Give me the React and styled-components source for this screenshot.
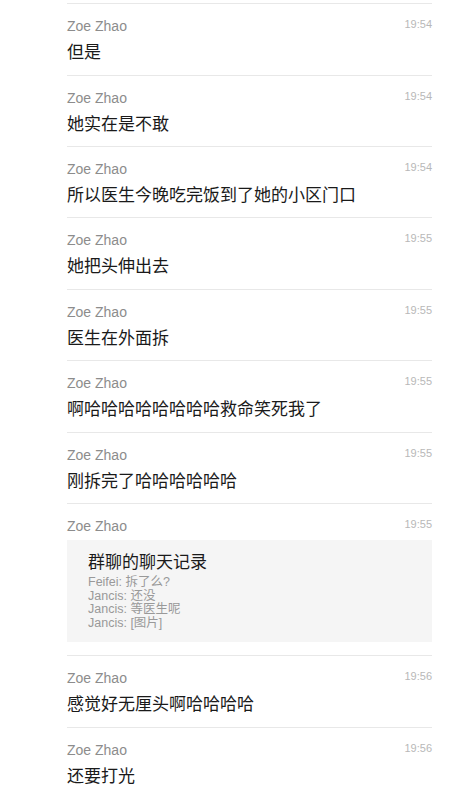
import styled, { createGlobalStyle } from "styled-components";

const GlobalStyle = createGlobalStyle`
  html, body {
    margin: 0;
    padding: 0;
    background: #ffffff;
  }
  body {
    font-family: "Liberation Sans", "Noto Sans CJK SC", sans-serif;
  }
`;

const ChatList = styled.div`
  display: flex;
  flex-direction: column;
  padding: 3.3px 17px 0 67px;
`;

const MessageItem = styled.div`
  display: flex;
  flex-direction: column;
  border-top: 1px solid #e8e8e8;
  padding: 12px 0 13.4px;
`;

const MessageHeader = styled.div`
  display: flex;
  flex-direction: row;
  justify-content: space-between;
  align-items: flex-start;
  height: 20px;
`;

const SenderName = styled.span`
  font-size: 14px;
  line-height: 20px;
  color: #8c8c8c;
`;

const SentTime = styled.span`
  font-size: 11px;
  line-height: 14px;
  margin-top: 1px;
  color: #b8b8b8;
`;

const MessageText = styled.div`
  margin-top: 4px;
  font-family: "Noto Sans CJK SC", "Liberation Sans", sans-serif;
  font-size: 17px;
  line-height: 21px;
  color: #1a1a1a;
`;

const RecordCard = styled.div`
  margin-top: 4px;
  display: flex;
  flex-direction: column;
  gap: 5px;
  padding: 11px 21px 12px;
  background: #f5f5f5;
`;

const RecordTitle = styled.div`
  font-family: "Noto Sans CJK SC", "Liberation Sans", sans-serif;
  font-size: 17px;
  line-height: 20px;
  color: #1a1a1a;
`;

const RecordLines = styled.div`
  display: flex;
  flex-direction: column;
`;

const RecordLine = styled.div`
  font-size: 12.5px;
  line-height: 13.5px;
  color: #999999;
`;

const messages = [
  { time: "19:54", text: "但是" },
  { time: "19:54", text: "她实在是不敢" },
  { time: "19:54", text: "所以医生今晚吃完饭到了她的小区门口" },
  { time: "19:55", text: "她把头伸出去" },
  { time: "19:55", text: "医生在外面拆" },
  { time: "19:55", text: "啊哈哈哈哈哈哈哈哈救命笑死我了" },
  { time: "19:55", text: "刚拆完了哈哈哈哈哈哈" },
  {
    time: "19:55",
    record: {
      title: "群聊的聊天记录",
      lines: ["Feifei: 拆了么?", "Jancis: 还没", "Jancis: 等医生呢", "Jancis: [图片]"],
    },
  },
  { time: "19:56", text: "感觉好无厘头啊哈哈哈哈" },
  { time: "19:56", text: "还要打光" },
];

export default function App() {
  return (
    <>
      <GlobalStyle />
      <ChatList>
        {messages.map((msg, i) => (
          <MessageItem key={i}>
            <MessageHeader>
              <SenderName>Zoe Zhao</SenderName>
              <SentTime>{msg.time}</SentTime>
            </MessageHeader>
            {msg.record ? (
              <RecordCard>
                <RecordTitle>{msg.record.title}</RecordTitle>
                <RecordLines>
                  {msg.record.lines.map((line) => (
                    <RecordLine key={line}>{line}</RecordLine>
                  ))}
                </RecordLines>
              </RecordCard>
            ) : (
              <MessageText>{msg.text}</MessageText>
            )}
          </MessageItem>
        ))}
      </ChatList>
    </>
  );
}
